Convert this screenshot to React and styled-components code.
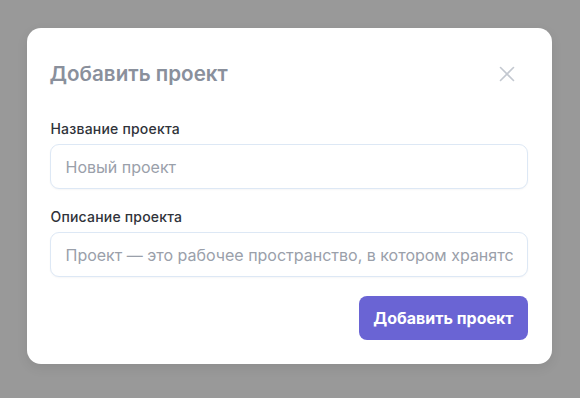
import React from "react";
import styled, { createGlobalStyle } from "styled-components";

const GlobalStyle = createGlobalStyle`
  html, body {
    margin: 0;
    padding: 0;
    height: 100%;
    background: #999999;
    font-family: Inter, "Noto Sans", sans-serif;
  }
  #root {
    height: 100%;
  }
`;

const App = () => {
  return (
    <>
      <GlobalStyle />
      <Overlay>
        <Modal>
          <Header>
            <Title>Добавить проект</Title>
            <CloseButton aria-label="Закрыть">
              <svg width="16" height="16" viewBox="0 0 16 16" fill="none">
                <path
                  d="M1.5 1.5L14.5 14.5M14.5 1.5L1.5 14.5"
                  stroke="#c3c8d0"
                  strokeWidth="1.6"
                  strokeLinecap="round"
                />
              </svg>
            </CloseButton>
          </Header>
          <Field>
            <Label>Название проекта</Label>
            <Input placeholder="Новый проект" />
          </Field>
          <Field>
            <Label>Описание проекта</Label>
            <Input placeholder="Проект — это рабочее пространство, в котором хранятся задачи" />
          </Field>
          <Footer>
            <SubmitButton>Добавить проект</SubmitButton>
          </Footer>
        </Modal>
      </Overlay>
    </>
  );
};

const Overlay = styled.div`
  display: flex;
  justify-content: center;
  padding-top: 28px;
`;

const Modal = styled.div`
  width: 525px;
  box-sizing: border-box;
  margin-left: -2px;
  background: #ffffff;
  border-radius: 14px;
  padding: 30px 24px 24px 23px;
  box-shadow: 0 4px 12px rgba(0, 0, 0, 0.08);
  display: flex;
  flex-direction: column;
`;

const Header = styled.div`
  display: flex;
  align-items: center;
  justify-content: space-between;
  margin-bottom: 30px;
`;

const Title = styled.h2`
  margin: 0;
  font-size: 20.6px;
  line-height: 32px;
  font-weight: 600;
  color: #8a909c;
`;

const CloseButton = styled.button`
  border: none;
  background: none;
  padding: 0;
  width: 32px;
  height: 32px;
  margin-right: 5px;
  display: flex;
  align-items: center;
  justify-content: center;
  cursor: pointer;
`;

const Field = styled.div`
  display: flex;
  flex-direction: column;
  gap: 6px;
  margin-bottom: 19px;
`;

const Label = styled.label`
  font-size: 14px;
  line-height: 18px;
  font-weight: 500;
  letter-spacing: 0.2px;
  color: #30333a;
  margin-left: 1px;
`;

const Input = styled.input`
  height: 45px;
  box-sizing: border-box;
  border: 1px solid #dde8f5;
  border-radius: 9px;
  padding: 0 14px 0 15px;
  font-family: inherit;
  font-size: 16px;
  color: #333740;
  outline: none;
  box-shadow: 0 1px 2px rgba(16, 24, 40, 0.04);

  &::placeholder {
    color: #9aa0aa;
  }
`;

const Footer = styled.div`
  display: flex;
  justify-content: flex-end;
`;

const SubmitButton = styled.button`
  height: 44px;
  padding: 0 14px;
  border: none;
  border-radius: 8px;
  background: #6a64d4;
  color: #ffffff;
  font-family: inherit;
  font-size: 16px;
  font-weight: 700;
  cursor: pointer;
`;

export default App;
